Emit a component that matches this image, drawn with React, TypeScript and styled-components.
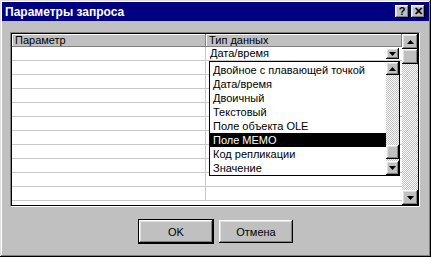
import React from 'react';
import styled, { createGlobalStyle, css } from 'styled-components';

const GlobalStyle = createGlobalStyle`
  html, body {
    margin: 0;
    padding: 0;
    width: 431px;
    height: 257px;
    overflow: hidden;
    background: #c0c0c0;
  }
`;

const raised = css`
  background: #c0c0c0;
  box-shadow: inset -1px -1px #000, inset 1px 1px #fff, inset -2px -2px #808080,
    inset 2px 2px #dfdfdf;
`;

const dither = css`
  background: repeating-conic-gradient(#c0c0c0 0 25%, #ffffff 0 50%) 0 0 / 2px 2px;
`;

const Window = styled.div`
  width: 431px;
  height: 257px;
  box-sizing: border-box;
  padding: 2px;
  background: #c0c0c0;
  box-shadow: inset -1px -1px #000, inset 1px 1px #dfdfdf, inset -2px -2px #808080,
    inset 2px 2px #fff;
  display: flex;
  flex-direction: column;
  font-family: 'Liberation Sans', Arial, sans-serif;
  font-size: 11px;
  color: #000;
`;

const TitleBar = styled.div`
  height: 19px;
  background: #000080;
  color: #fff;
  display: flex;
  align-items: center;
  justify-content: space-between;
  padding: 0 4px 0 3px;
`;

const Title = styled.span`
  font-weight: bold;
  font-size: 12px;
`;

const TitleButtons = styled.div`
  display: flex;
  gap: 2px;
`;

const TitleButton = styled.div`
  ${raised};
  width: 14px;
  height: 13px;
  color: #000;
  font-weight: bold;
  font-size: 11px;
  line-height: 13px;
  text-align: center;
`;

const Body = styled.div`
  flex: 1;
  display: flex;
  flex-direction: column;
  padding: 11px 9px 0 8px;
`;

const GridFrame = styled.div`
  height: 175px;
  box-sizing: border-box;
  border-top: 1px solid #808080;
  border-left: 1px solid #808080;
  border-bottom: 1px solid #fff;
  border-right: 1px solid #fff;
  display: flex;
`;

const GridInner = styled.div`
  flex: 1;
  display: flex;
  border: 1px solid #000;
  background: #fff;
`;

const Table = styled.div`
  flex: 1;
  position: relative;
  display: flex;
  flex-direction: column;
  overflow: hidden;
`;

const Columns = css`
  display: grid;
  grid-template-columns: 194px 1fr;
`;

const HeaderRow = styled.div`
  ${Columns};
  height: 13px;
`;

const HeaderCell = styled.div`
  background: #c0c0c0;
  box-sizing: border-box;
  border-right: 1px solid #808080;
  border-bottom: 1px solid #808080;
  box-shadow: inset 1px 1px #fff;
  padding-left: 3px;
  line-height: 12px;
  white-space: nowrap;
`;

const Row = styled.div`
  ${Columns};
  height: 14px;
`;

const Cell = styled.div<{ $last?: boolean }>`
  box-sizing: border-box;
  border-bottom: 1px solid #c8c8c8;
  border-right: ${(p) => (p.$last ? 'none' : '1px solid #c8c8c8')};
  padding-left: 4px;
  line-height: 13px;
  display: flex;
  align-items: center;
  justify-content: space-between;
  white-space: nowrap;
`;

const ComboText = styled.span`
  line-height: 13px;
`;

const ComboButton = styled.div`
  ${raised};
  width: 13px;
  height: 11px;
  margin-right: 3px;
  display: flex;
  align-items: center;
  justify-content: center;
`;

const DropList = styled.div`
  position: absolute;
  left: 197px;
  top: 27px;
  width: 191px;
  height: 115px;
  box-sizing: border-box;
  border: 1px solid #000;
  background: #fff;
  display: flex;
`;

const Items = styled.div`
  flex: 1;
  padding-top: 1px;
  display: flex;
  flex-direction: column;
`;

const Item = styled.div<{ $selected?: boolean }>`
  height: 14px;
  line-height: 14px;
  padding-left: 3px;
  white-space: nowrap;
  background: ${(p) => (p.$selected ? '#000' : 'transparent')};
  color: ${(p) => (p.$selected ? '#fff' : '#000')};
`;

const ScrollBar = styled.div<{ $w: number }>`
  width: ${(p) => p.$w}px;
  display: flex;
  flex-direction: column;
`;

const ArrowButton = styled.div<{ $h: number }>`
  ${raised};
  height: ${(p) => p.$h}px;
  display: flex;
  align-items: center;
  justify-content: center;
  flex-shrink: 0;
`;

const Track = styled.div<{ $end?: boolean }>`
  ${dither};
  flex: 1;
  display: flex;
  flex-direction: column;
  justify-content: ${(p) => (p.$end ? 'flex-end' : 'flex-start')};
`;

const Thumb = styled.div<{ $h: number; $mb?: number }>`
  ${raised};
  height: ${(p) => p.$h}px;
  margin-bottom: ${(p) => p.$mb ?? 0}px;
  flex-shrink: 0;
`;

const ButtonRow = styled.div`
  display: flex;
  justify-content: center;
  gap: 6px;
  margin-top: 13px;
  padding-left: 2px;
`;

const PushButton = styled.div<{ $default?: boolean }>`
  ${raised};
  width: 74px;
  height: 23px;
  box-sizing: border-box;
  display: flex;
  align-items: center;
  justify-content: center;
  ${(p) =>
    p.$default &&
    css`
      outline: 1px solid #000;
      box-shadow: inset -1px -1px #000, inset 1px 1px #fff, inset -2px -2px #808080,
        inset 2px 2px #dfdfdf, 0 0 0 0 #000;
    `}
`;

function Arrow({ down }: { down?: boolean }) {
  return (
    <svg width="7" height="4" viewBox="0 0 7 4">
      <polygon points={down ? '0,0 7,0 3.5,4' : '0,4 7,4 3.5,0'} fill="#000" />
    </svg>
  );
}

const types = [
  'Двойное с плавающей точкой',
  'Дата/время',
  'Двоичный',
  'Текстовый',
  'Поле объекта OLE',
  'Поле MEMO',
  'Код репликации',
  'Значение',
];

export default function App() {
  const rows = Array.from({ length: 11 });
  return (
    <Window>
      <GlobalStyle />
      <TitleBar>
        <Title>Параметры запроса</Title>
        <TitleButtons>
          <TitleButton>?</TitleButton>
          <TitleButton>✕</TitleButton>
        </TitleButtons>
      </TitleBar>
      <Body>
        <GridFrame>
          <GridInner>
            <Table>
              <HeaderRow>
                <HeaderCell>Параметр</HeaderCell>
                <HeaderCell>Тип данных</HeaderCell>
              </HeaderRow>
              {rows.map((_, i) => (
                <Row key={i}>
                  <Cell />
                  <Cell $last>
                    {i === 0 && (
                      <>
                        <ComboText>Дата/время</ComboText>
                        <ComboButton>
                          <Arrow down />
                        </ComboButton>
                      </>
                    )}
                  </Cell>
                </Row>
              ))}
              <DropList>
                <Items>
                  {types.map((t) => (
                    <Item key={t} $selected={t === 'Поле MEMO'}>
                      {t}
                    </Item>
                  ))}
                </Items>
                <ScrollBar $w={13}>
                  <ArrowButton $h={13}>
                    <Arrow />
                  </ArrowButton>
                  <Track $end>
                    <Thumb $h={14} $mb={2} />
                  </Track>
                  <ArrowButton $h={14}>
                    <Arrow down />
                  </ArrowButton>
                </ScrollBar>
              </DropList>
            </Table>
            <ScrollBar $w={16}>
              <ArrowButton $h={15}>
                <Arrow />
              </ArrowButton>
              <Thumb $h={15} />
              <Track />
              <ArrowButton $h={15}>
                <Arrow down />
              </ArrowButton>
            </ScrollBar>
          </GridInner>
        </GridFrame>
        <ButtonRow>
          <PushButton $default>OK</PushButton>
          <PushButton>Отмена</PushButton>
        </ButtonRow>
      </Body>
    </Window>
  );
}
